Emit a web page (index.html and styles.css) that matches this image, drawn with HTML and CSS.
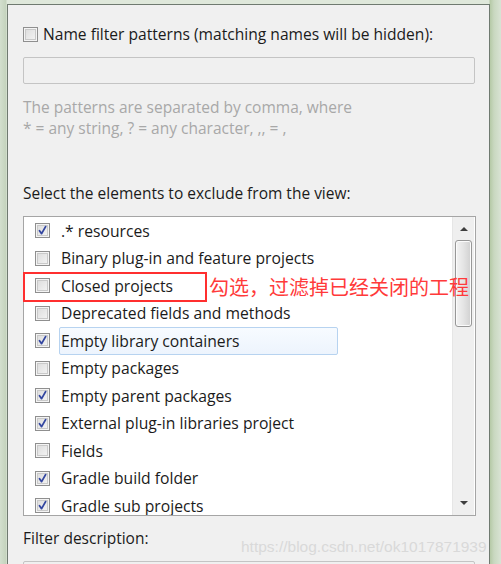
FILE: index.html
```html
<!DOCTYPE html>
<html>
<head>
<meta charset="utf-8">
<link rel="stylesheet" href="styles.css">
</head>
<body>
<div class="desk">
  <div class="panel">
    <label class="top-row"><span class="cb"></span><span>Name filter patterns (matching names will be hidden):</span></label>
    <div class="input"></div>
    <p class="hint">The patterns are separated by comma, where<br>* = any string, ? = any character, ,, = ,</p>
    <p class="label">Select the elements to exclude from the view:</p>
    <div class="list">
      <div class="items">
        <div class="row"><span class="cb on"><svg viewBox="0 0 15 15"><path d="M4.5 7.8 L6.6 10.6 L10.6 3.6"/></svg></span><span class="txt">.* resources</span></div>
        <div class="row"><span class="cb"></span><span class="txt">Binary plug-in and feature projects</span></div>
        <div class="row"><span class="cb"></span><span class="txt">Closed projects</span></div>
        <div class="row"><span class="cb"></span><span class="txt">Deprecated fields and methods</span></div>
        <div class="row"><span class="cb on"><svg viewBox="0 0 15 15"><path d="M4.5 7.8 L6.6 10.6 L10.6 3.6"/></svg></span><span class="txt sel">Empty library containers</span></div>
        <div class="row"><span class="cb"></span><span class="txt">Empty packages</span></div>
        <div class="row"><span class="cb on"><svg viewBox="0 0 15 15"><path d="M4.5 7.8 L6.6 10.6 L10.6 3.6"/></svg></span><span class="txt">Empty parent packages</span></div>
        <div class="row"><span class="cb on"><svg viewBox="0 0 15 15"><path d="M4.5 7.8 L6.6 10.6 L10.6 3.6"/></svg></span><span class="txt">External plug-in libraries project</span></div>
        <div class="row"><span class="cb"></span><span class="txt">Fields</span></div>
        <div class="row"><span class="cb on"><svg viewBox="0 0 15 15"><path d="M4.5 7.8 L6.6 10.6 L10.6 3.6"/></svg></span><span class="txt">Gradle build folder</span></div>
        <div class="row"><span class="cb on"><svg viewBox="0 0 15 15"><path d="M4.5 7.8 L6.6 10.6 L10.6 3.6"/></svg></span><span class="txt">Gradle sub projects</span></div>
      </div>
      <div class="scrollbar">
        <span class="arrow up"></span>
        <span class="thumb"></span>
        <span class="track"></span>
        <span class="arrow down"></span>
      </div>
    </div>
    <p class="label desc">Filter description:</p>
    <div class="input"></div>

    <div class="redbox"></div>
    <div class="note">勾选，过滤掉已经关闭的工程</div>
    <div class="watermark">https://blog.csdn.net/ok1017871939</div>
  </div>
</div>
</body>
</html>
```
FILE: styles.css
```css
html, body {
  margin: 0;
  padding: 0;
}
body {
  width: 501px;
  height: 564px;
  overflow: hidden;
  background: #ccdac6;
}
.desk {
  height: 564px;
  padding-top: 4px;
  box-sizing: border-box;
  background: linear-gradient(to right, #d3dfce 0, #c4d3bd 6px, #dfe8db 7px, #dfe8db 489px, #b5c9a6 490px, #c9d8c0 494px, #d9e3d4 501px);
}
.panel {
  position: relative;
  margin: 0 11px 0 7px;
  height: 560px;
  box-sizing: border-box;
  border: 1px solid #6f7a70;
  border-bottom: none;
  background: #f0f0f0;
  padding: 0 13px 0 15px;
  overflow: hidden;
  font-family: "Open Sans", "Noto Sans", sans-serif;
  font-size: 15.5px;
  color: #1b1b1b;
}
.top-row {
  display: flex;
  align-items: center;
  gap: 5px;
  height: 20px;
  margin-top: 19px;
  line-height: 20px;
  font-size: 15.6px;
}
.cb {
  flex: none;
  width: 15px;
  height: 15px;
  box-sizing: border-box;
  border: 1px solid #8f8f8f;
  background: linear-gradient(135deg, #dadada, #f6f6f6);
  box-shadow: inset 0 0 0 1px #f4f4f4, inset 0 0 0 2px #c9c9c9;
  display: inline-block;
  position: relative;
}
.cb svg {
  position: absolute;
  left: -1px;
  top: -1px;
  width: 15px;
  height: 15px;
}
.cb svg path {
  fill: none;
  stroke: #3346a0;
  stroke-width: 1.8;
  stroke-linecap: round;
  stroke-linejoin: round;
}
.input {
  margin-top: 13px;
  width: 452px;
  height: 27px;
  box-sizing: border-box;
  border: 1px solid #c4c4c4;
  border-radius: 2px;
  background: #f0f0f0;
}
.hint {
  margin: 12.5px 0 0;
  line-height: 21px;
  color: #a8a8a8;
}
.label {
  margin: 44.5px 0 0;
  line-height: 20px;
  font-size: 15.5px;
}
.list {
  margin-top: 13px;
  width: 453px;
  height: 300px;
  box-sizing: border-box;
  border: 1px solid #a5a5a5;
  background: #fff;
  display: flex;
  overflow: hidden;
}
.items {
  flex: 1;
  padding-left: 11px;
  overflow: hidden;
  font-size: 15.7px;
}
.row {
  height: 27.5px;
  display: flex;
  align-items: center;
  gap: 11px;
  white-space: nowrap;
}
.row .txt {
  line-height: 20px;
  padding: 3px 0 3px 1px;
  border: 1px solid transparent;
  margin-left: -2px;
}
.row .txt.sel {
  width: 276px;
  border-color: #b7d3f0;
  border-radius: 2px;
  background: linear-gradient(#f7fbff, #edf4fd);
}
.scrollbar {
  flex: none;
  width: 21px;
  margin: 0 1px 0 0;
  background: #efefef;
  border-left: 1px solid #e6e6e6;
  display: flex;
  flex-direction: column;
  align-items: center;
}
.arrow {
  flex: none;
  width: 0;
  height: 0;
  border-left: 4px solid transparent;
  border-right: 4px solid transparent;
}
.arrow.up {
  margin-top: 10px;
  border-bottom: 4px solid #3e3e3e;
}
.arrow.down {
  margin-bottom: 10px;
  border-top: 4px solid #3e3e3e;
}
.thumb {
  flex: none;
  margin-top: 9px;
  width: 17px;
  height: 87px;
  box-sizing: border-box;
  border: 1px solid #979797;
  border-radius: 3px;
  background: linear-gradient(to right, #f3f3f3, #e4e4e4 50%, #d0d0d0);
  box-shadow: inset 0 0 0 1px #fbfbfb;
}
.track {
  flex: 1;
}
.desc {
  margin-top: 12px;
  font-size: 15.5px;
}
.redbox {
  position: absolute;
  left: 15px;
  top: 267px;
  width: 184px;
  height: 30px;
  box-sizing: border-box;
  border: 2px solid #ff2f2f;
}
.note {
  position: absolute;
  left: 201px;
  top: 268px;
  line-height: 28px;
  font-family: "Noto Sans CJK SC", sans-serif;
  font-size: 20px;
  color: #ff3a3a;
  white-space: nowrap;
}
.watermark {
  position: absolute;
  left: 233px;
  top: 531px;
  line-height: 22px;
  font-family: "Liberation Sans", Arial, sans-serif;
  font-size: 15.5px;
  color: #d9d9d9;
  white-space: nowrap;
}
```
